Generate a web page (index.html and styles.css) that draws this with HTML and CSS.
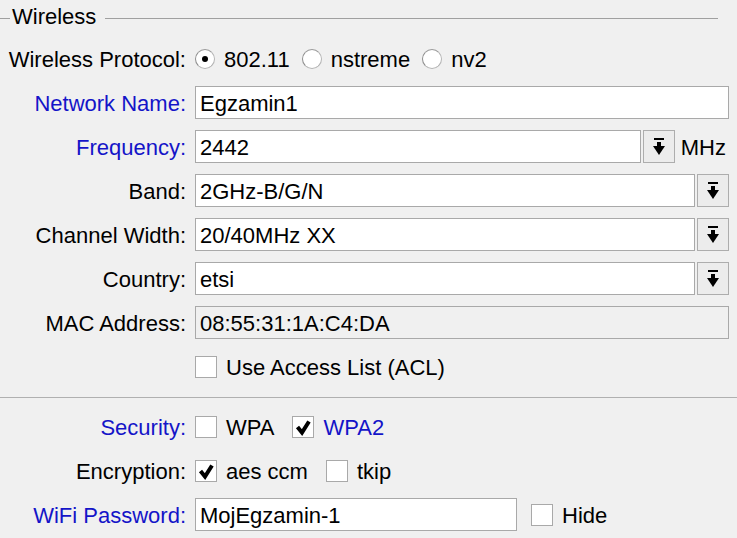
FILE: index.html
```html
<!DOCTYPE html>
<html lang="en">
<head>
    <meta charset="UTF-8">
    <title>Wireless</title>
    <link rel="stylesheet" href="styles.css">
</head>
<body>
    <div class="panel">
        <div class="legend">
            <span class="legend-line short"></span>
            <span class="legend-title">Wireless</span>
            <span class="legend-line"></span>
        </div>

        <div class="rows first">
            <div class="row">
                <div class="label">Wireless Protocol:</div>
                <div class="control">
                    <span class="option"><span class="radio checked"></span><span class="text">802.11</span></span>
                    <span class="option"><span class="radio"></span><span class="text">nstreme</span></span>
                    <span class="option"><span class="radio"></span><span class="text">nv2</span></span>
                </div>
            </div>
            <div class="row">
                <div class="label blue">Network Name:</div>
                <div class="control">
                    <div class="field"><span class="text">Egzamin1</span></div>
                </div>
            </div>
            <div class="row">
                <div class="label blue">Frequency:</div>
                <div class="control">
                    <div class="field"><span class="text">2442</span></div>
                    <div class="drop-btn">
                        <svg width="12" height="17" viewBox="0 0 12 17"><rect x="1" y="0" width="10" height="2"/><rect x="4" y="4" width="4" height="4.5"/><polygon points="0,8 12,8 6,17"/></svg>
                    </div>
                    <span class="text unit">MHz</span>
                </div>
            </div>
            <div class="row">
                <div class="label">Band:</div>
                <div class="control">
                    <div class="field"><span class="text">2GHz-B/G/N</span></div>
                    <div class="drop-btn">
                        <svg width="12" height="17" viewBox="0 0 12 17"><rect x="1" y="0" width="10" height="2"/><rect x="4" y="4" width="4" height="4.5"/><polygon points="0,8 12,8 6,17"/></svg>
                    </div>
                </div>
            </div>
            <div class="row">
                <div class="label">Channel Width:</div>
                <div class="control">
                    <div class="field"><span class="text">20/40MHz XX</span></div>
                    <div class="drop-btn">
                        <svg width="12" height="17" viewBox="0 0 12 17"><rect x="1" y="0" width="10" height="2"/><rect x="4" y="4" width="4" height="4.5"/><polygon points="0,8 12,8 6,17"/></svg>
                    </div>
                </div>
            </div>
            <div class="row">
                <div class="label">Country:</div>
                <div class="control">
                    <div class="field"><span class="text">etsi</span></div>
                    <div class="drop-btn">
                        <svg width="12" height="17" viewBox="0 0 12 17"><rect x="1" y="0" width="10" height="2"/><rect x="4" y="4" width="4" height="4.5"/><polygon points="0,8 12,8 6,17"/></svg>
                    </div>
                </div>
            </div>
            <div class="row">
                <div class="label">MAC Address:</div>
                <div class="control">
                    <div class="field readonly"><span class="text">08:55:31:1A:C4:DA</span></div>
                </div>
            </div>
            <div class="row">
                <div class="label"></div>
                <div class="control">
                    <span class="option"><span class="check"></span><span class="text">Use Access List (ACL)</span></span>
                </div>
            </div>
        </div>

        <div class="separator"></div>

        <div class="rows">
            <div class="row">
                <div class="label blue">Security:</div>
                <div class="control">
                    <span class="option wide"><span class="check"></span><span class="text">WPA</span></span>
                    <span class="option"><span class="check">
                        <svg width="20" height="20" viewBox="0 0 20 20"><polyline points="4.5,10 9,15.5 16,4.5"/></svg>
                    </span><span class="text blue">WPA2</span></span>
                </div>
            </div>
            <div class="row">
                <div class="label">Encryption:</div>
                <div class="control">
                    <span class="option wide"><span class="check">
                        <svg width="20" height="20" viewBox="0 0 20 20"><polyline points="4.5,10 9,15.5 16,4.5"/></svg>
                    </span><span class="text">aes ccm</span></span>
                    <span class="option"><span class="check"></span><span class="text">tkip</span></span>
                </div>
            </div>
            <div class="row">
                <div class="label blue">WiFi Password:</div>
                <div class="control">
                    <div class="field password"><span class="text">MojEgzamin-1</span></div>
                    <span class="option"><span class="check"></span><span class="text">Hide</span></span>
                </div>
            </div>
        </div>
    </div>
</body>
</html>
```

FILE: styles.css
```css
* {
    margin: 0;
    padding: 0;
    box-sizing: border-box;
}

body {
    font-family: 'Liberation Sans', Arial, sans-serif;
    font-size: 22px;
    line-height: 26px;
    background: #f0f0f0;
    color: #000;
}

.panel {
    padding-top: 4px;
}

/* group box title */
.legend {
    display: flex;
    height: 26px;
    margin-right: 19px;
}

.legend-line {
    flex: 1;
    height: 1px;
    margin-top: 14px;
    background: #a0a0a0;
}

.legend-line.short {
    flex: none;
    width: 10px;
}

.legend-title {
    margin: 0 9px 0 2px;
}

.rows {
    display: flex;
    flex-direction: column;
    gap: 11px;
    padding-right: 8px;
}

.rows.first {
    margin-top: 12px;
}

.row {
    display: grid;
    grid-template-columns: 186px 1fr;
    column-gap: 9px;
    height: 33px;
    align-items: center;
}

.label {
    text-align: right;
    white-space: nowrap;
    padding-top: 3px;
}

.blue {
    color: #1414c8;
}

.control {
    display: flex;
    align-items: center;
    height: 33px;
}

.text {
    padding-top: 3px;
    white-space: nowrap;
}

.field {
    flex: 1;
    height: 33px;
    display: flex;
    align-items: center;
    padding: 0 4px;
    background: #fff;
    border: 1px solid #a9a9a9;
}

.field.readonly {
    background: #f0f0f0;
}

.field.password {
    flex: none;
    width: 322px;
    margin-right: 14px;
}

.drop-btn {
    width: 32px;
    height: 33px;
    margin-left: 2px;
    display: flex;
    align-items: center;
    justify-content: center;
    background: #ececec;
    border: 1px solid #adadad;
}

.unit {
    margin-left: 6px;
    margin-right: 3px;
}

.option {
    display: flex;
    align-items: center;
    gap: 9px;
    margin-right: 12px;
}

.option.wide {
    margin-right: 18px;
}

.radio {
    width: 20px;
    height: 20px;
    border-radius: 50%;
    border: 1px solid #b4b4b4;
    border-left-color: #8c8c8c;
    border-top-color: #9a9a9a;
    background: #fff;
    display: flex;
    align-items: center;
    justify-content: center;
}

.radio.checked::after {
    content: "";
    width: 6px;
    height: 6px;
    border-radius: 50%;
    background: #000;
}

.check {
    width: 22px;
    height: 22px;
    border: 1px solid #a9a9a9;
    background: #fff;
    display: flex;
    align-items: center;
    justify-content: center;
}

.check svg polyline {
    fill: none;
    stroke: #000;
    stroke-width: 4;
}

.separator {
    height: 1px;
    background: #b0b0b0;
    margin: 14px 0 12px;
}
```
